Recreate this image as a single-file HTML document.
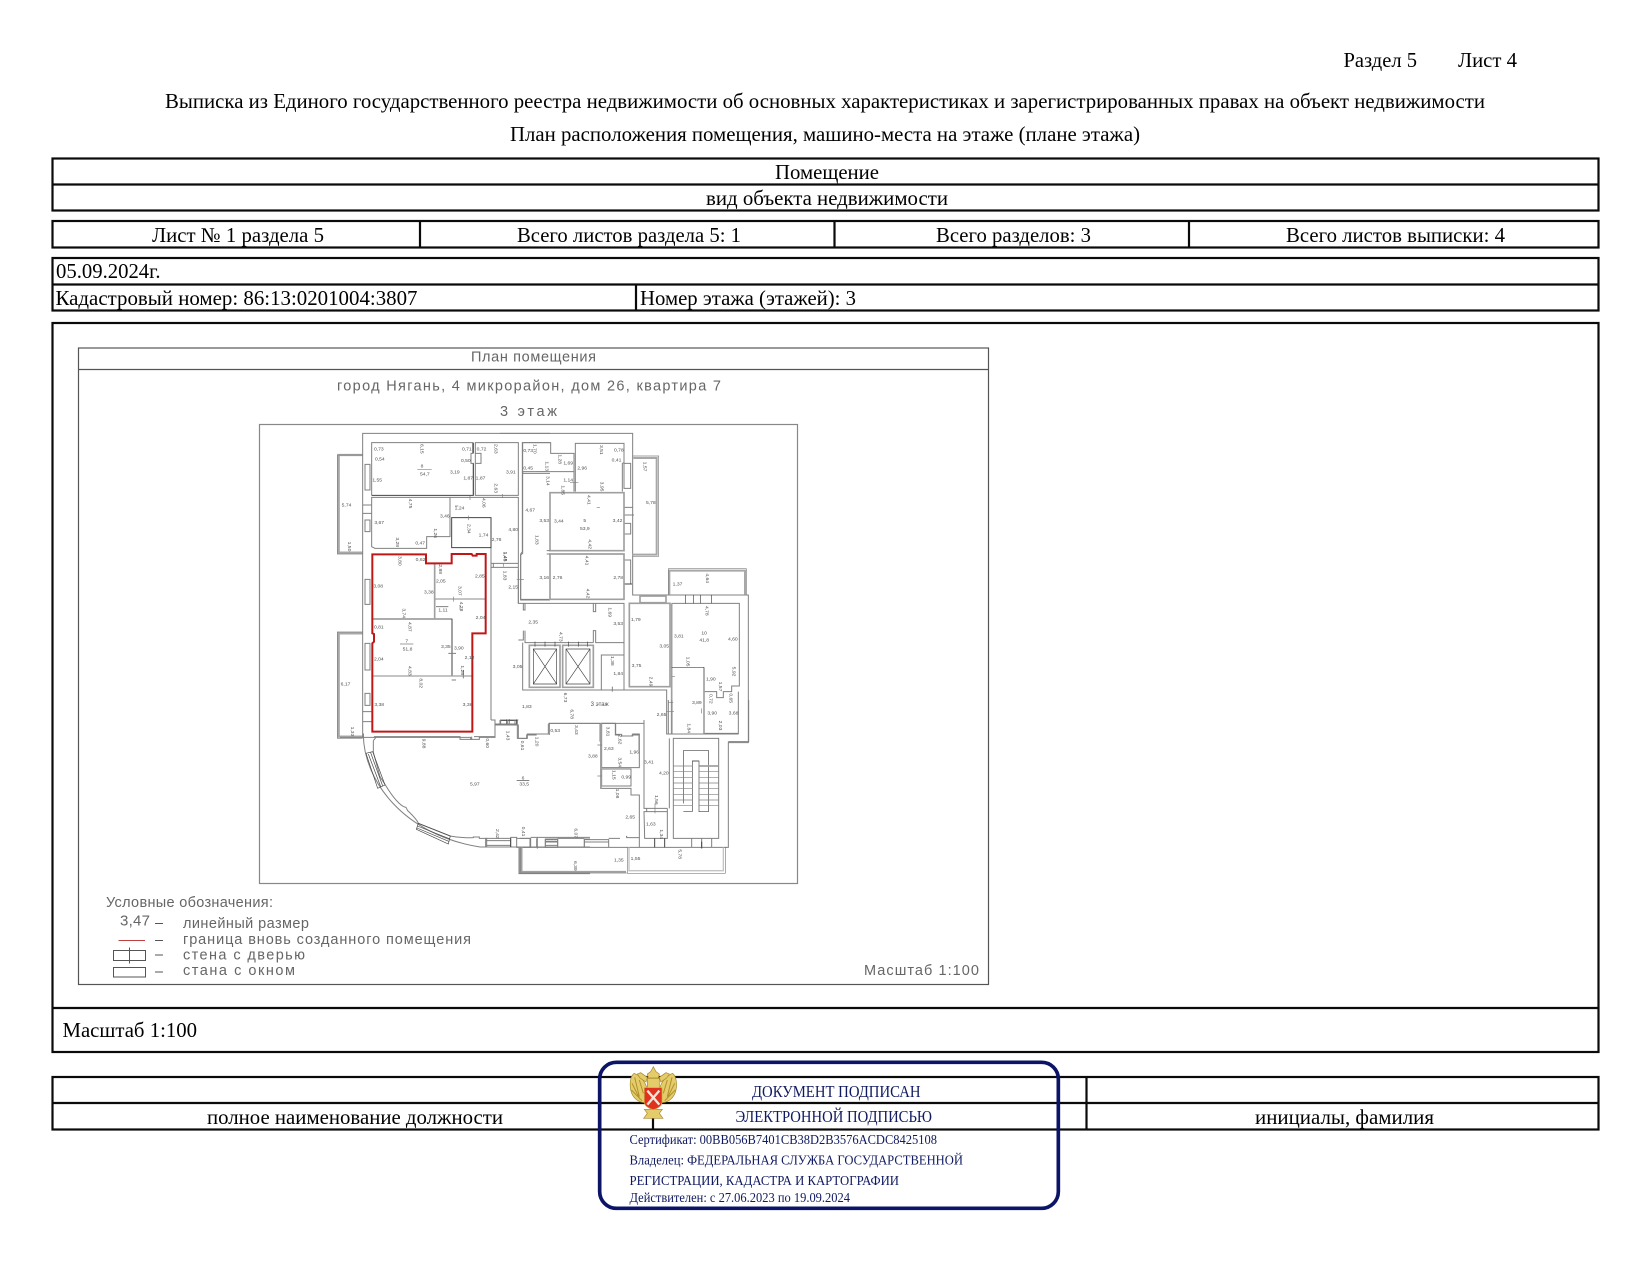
<!DOCTYPE html>
<html lang="ru"><head><meta charset="utf-8"><title>Выписка</title>
<style>
html,body{margin:0;padding:0;background:#fff;width:1650px;height:1275px;overflow:hidden}
svg{display:block}
.m text,text.m{font-family:"Liberation Serif",serif;font-size:21px;fill:#000}
.c text{font-family:"Liberation Sans",sans-serif;font-size:14.5px;fill:#666}
.n text{font-family:"Liberation Sans",sans-serif;font-size:15px;fill:#505050}
.w{fill:none;stroke:#808080;stroke-width:3}
.k{fill:none;stroke:#a0a0a0;stroke-width:5}
.d{fill:none;stroke:#444;stroke-width:3}
.t{fill:none;stroke:#a8a8a8;stroke-width:7}
.s text{font-family:"Liberation Serif",serif;fill:#101a60}
</style></head><body>
<svg xmlns="http://www.w3.org/2000/svg" width="1650" height="1275" viewBox="0 0 1650 1275">
<defs><filter id="b" x="-2%" y="-2%" width="104%" height="104%"><feGaussianBlur stdDeviation="0.3"/></filter></defs>
<rect width="1650" height="1275" fill="#fff"/>

<g class="m">
<text x="1343.5" y="67" textLength="73.5" lengthAdjust="spacingAndGlyphs">Раздел 5</text>
<text x="1458" y="67" textLength="59" lengthAdjust="spacingAndGlyphs">Лист 4</text>
<text x="165" y="108" textLength="1320" lengthAdjust="spacingAndGlyphs">Выписка из Единого государственного реестра недвижимости об основных характеристиках и зарегистрированных правах на объект недвижимости</text>
<text x="510" y="141" textLength="630" lengthAdjust="spacingAndGlyphs">План расположения помещения, машино-места на этаже (плане этажа)</text>
<text x="775" y="178.8" textLength="104" lengthAdjust="spacingAndGlyphs">Помещение</text>
<text x="706" y="204.8" textLength="242" lengthAdjust="spacingAndGlyphs">вид объекта недвижимости</text>
<text x="152" y="241.8" textLength="172" lengthAdjust="spacingAndGlyphs">Лист № 1 раздела 5</text>
<text x="517" y="241.8" textLength="224" lengthAdjust="spacingAndGlyphs">Всего листов раздела 5: 1</text>
<text x="936" y="241.8" textLength="155" lengthAdjust="spacingAndGlyphs">Всего разделов: 3</text>
<text x="1286" y="241.8" textLength="219" lengthAdjust="spacingAndGlyphs">Всего листов выписки: 4</text>
<text x="56" y="277.8" textLength="104.5" lengthAdjust="spacingAndGlyphs">05.09.2024г.</text>
<text x="55.5" y="305" textLength="362" lengthAdjust="spacingAndGlyphs">Кадастровый номер: 86:13:0201004:3807</text>
<text x="640" y="305" textLength="216" lengthAdjust="spacingAndGlyphs">Номер этажа (этажей): 3</text>
<text x="62.5" y="1037" textLength="134.5" lengthAdjust="spacingAndGlyphs">Масштаб 1:100</text>
<text x="207" y="1124" textLength="296" lengthAdjust="spacingAndGlyphs">полное наименование должности</text>
<text x="1255" y="1124" textLength="179" lengthAdjust="spacingAndGlyphs">инициалы, фамилия</text>
</g>

<g fill="none" stroke="#0a0a0a" stroke-width="2.2">
<rect x="52.5" y="158.5" width="1546" height="52"/><path d="M52 184.5H1599"/>
<rect x="52.5" y="221" width="1546" height="26.5"/><path d="M420 221V247.5M834.5 221V247.5M1189 221V247.5"/>
<rect x="52.5" y="258" width="1546" height="52.5"/><path d="M52 284.5H1599M636 284.5V310.5"/>
<rect x="52.5" y="323" width="1546" height="729"/><path d="M52 1008H1599"/>
<rect x="52.5" y="1077" width="1546" height="52.5"/><path d="M52 1103H1599M653 1077V1129.5M1086.5 1077V1129.5"/>
</g>

<g filter="url(#b)">
<g fill="none" stroke="#555" stroke-width="1.2">
<rect x="78.5" y="348" width="910" height="636.5"/><path d="M78.5 369.5H988.5"/>
</g>
<rect x="259.5" y="424.5" width="538" height="459" fill="none" stroke="#888" stroke-width="1.2"/>
<g class="c">
<text x="471" y="361.5" textLength="125" lengthAdjust="spacing">План помещения</text>
<text x="337" y="390.5" textLength="384" lengthAdjust="spacing">город Нягань, 4 микрорайон, дом 26, квартира 7</text>
<text x="500" y="416" textLength="57" lengthAdjust="spacing">3 этаж</text>
<text x="106" y="907" textLength="167" lengthAdjust="spacing">Условные обозначения:</text>
<text x="120" y="925.5" textLength="30" lengthAdjust="spacing" style="font-size:15px">3,47</text>
<text x="183" y="928" textLength="126" lengthAdjust="spacing">линейный размер</text>
<text x="183" y="944" textLength="288" lengthAdjust="spacing">граница вновь созданного помещения</text>
<text x="183" y="959.5" textLength="122" lengthAdjust="spacing">стена с дверью</text>
<text x="183" y="975" textLength="112" lengthAdjust="spacing">стана с окном</text>
<text x="864" y="975" textLength="115" lengthAdjust="spacing">Масштаб 1:100</text>
</g>
<g fill="none" stroke="#555" stroke-width="1">
<path d="M155 923.5H163M155 940.5H163M155 955H163M155 972H163"/>
<rect x="113.5" y="950.5" width="32" height="10"/><path d="M129.5 947.5V963.5"/>
<rect x="113.5" y="967.5" width="32" height="9.5"/>
</g>
<path d="M118.5 940.5H145" stroke="#c04040" stroke-width="1" fill="none"/>

<!-- upper-left plan -->
<g transform="translate(250,420) scale(.33333)">
<path class="t" d="M338 105H266V398H338M338 640H266V950H338"/>
<path class="w" style="stroke-width:2" d="M338 105H262V402H338M338 636H262V955H338"/>
<path class="w" d="M900 40H338V952"/>
<path class="w" d="M345 133H360V210H345ZM345 300H360V335H345ZM345 478H360V553H345ZM345 670H360V750H345ZM345 820H360V856H345ZM338 255H365M338 280H365M338 875H368M338 905H368"/>
<path class="w" d="M365 226V68H668V100H663V130H670V226"/>
<path class="d" d="M365 226H670V130M670 68V100"/>
<path class="w" d="M676 68H805V226H676ZM676 100H693V130H676"/>
<path class="w" d="M365 232H600V350H530V385H375L365 380Z"/>
<path class="w" d="M600 232H805V430H723M723 293V900M730 430V442M805 430V442H722M805 442V550"/>
<path class="d" d="M605 383V293H723V383Z"/>
<path class="k" d="M554 430V595M368 597H607"/>
<path class="d" d="M606 597V767"/>
<path class="k" style="stroke-width:4" d="M554 537H705M368 768H670"/>
<path class="w" d="M817 395V68H900M817 385V395L812 402V540H900M817 160H900"/>
<path class="w" d="M595 560H558M595 700H618M605 780H618M640 750V775"/>
<path fill="none" stroke="#c01818" stroke-width="6" d="M367 403H528V430H605V402H665L668 407H680V402H707V640H667V935H367V670L372 665V642L367 640Z"/>
<path class="w" d="M723 900H735V912H800V900H805M735 912V950H672M372 950H630V958H665V950M338 952H372"/>
<path class="w" d="M750 900V912M778 897V912"/>
<path class="w" style="stroke-width:2" d="M625 258H615M630 555V570M610 545V530M810 478H822M660 228V240M757 222V234M655 287V300M760 430V440M600 258V270"/>
<path class="w" style="stroke-width:2" d="M502 148H545M450 672H490"/>
</g>
<g class="n" transform="translate(250,420) scale(.33333)">
<text x="372" y="92">0,73</text><text x="375" y="122">0,54</text><text x="367" y="185">1,55</text><text x="636" y="92">0,71</text><text x="633" y="126">0,50</text><text x="680" y="92">0,72</text><text x="600" y="160">3,19</text><text x="640" y="178">1,87</text><text x="677" y="178">1,87</text><text x="512" y="143">8</text><text x="510" y="167">54,7</text><text x="275" y="260">5,74</text><text x="373" y="312">3,67</text><text x="614" y="269">1,24</text><text x="570" y="292">3,46</text><text x="686" y="349">1,74</text><text x="725" y="363">2,76</text><text x="496" y="374">0,47</text><text x="370" y="502">3,08</text><text x="497" y="423">0,62</text><text x="558" y="488">2,05</text><text x="675" y="473">2,85</text><text x="522" y="520">3,38</text><text x="565" y="574">1,11</text><text x="677" y="597">2,04</text><text x="372" y="626">0,81</text><text x="372" y="722">2,04</text><text x="573" y="684">3,35</text><text x="612" y="689">3,90</text><text x="644" y="717">2,12</text><text x="373" y="858">3,38</text><text x="638" y="858">3,38</text><text x="466" y="668">7</text><text x="458" y="692">51,8</text><text x="272" y="796">6,17</text>
<text transform="rotate(90 512 72)" x="512" y="72">6,15</text><text transform="rotate(90 733 72)" x="733" y="72">2,63</text><text transform="rotate(90 733 190)" x="733" y="190">2,63</text><text transform="rotate(90 477 236)" x="477" y="236">4,75</text><text transform="rotate(90 697 234)" x="697" y="234">4,06</text><text transform="rotate(90 652 312)" x="652" y="312">2,34</text><text transform="rotate(90 552 325)" x="552" y="325">1,26</text><text transform="rotate(90 438 352)" x="438" y="352">3,28</text><text transform="rotate(90 445 408)" x="445" y="408">3,80</text><text transform="rotate(90 567 433)" x="567" y="433">2,88</text><text transform="rotate(90 458 565)" x="458" y="565">3,74</text><text transform="rotate(90 476 606)" x="476" y="606">4,87</text><text transform="rotate(90 476 738)" x="476" y="738">4,83</text><text transform="rotate(90 508 775)" x="508" y="775">8,02</text><text transform="rotate(90 626 498)" x="626" y="498">3,07</text><text transform="rotate(90 630 545)" x="630" y="545">4,28</text><text transform="rotate(90 633 736)" x="633" y="736">1,28</text><text transform="rotate(90 294 365)" x="294" y="365">1,50</text><text transform="rotate(90 760 452)" x="760" y="452">1,83</text><text transform="rotate(90 762 395)" x="762" y="395">1,45</text>
</g>

<!-- upper-right plan -->
<g transform="translate(500,420) scale(.33333)">
<path class="w" d="M0 40H398V525H745V968H686M398 525H420"/>
<path class="t" style="stroke-width:6" d="M400 114H470V404H398M508 523V452H735V523"/>
<path class="w" style="stroke-width:2" d="M398 108H476V409H398M505 525V446H739V525"/>
<path class="w" d="M372 130H392V205H372ZM372 262H398M372 285H402M372 310H392V342H372ZM372 420H392V492H372Z"/>
<path class="d" d="M372 492H396"/>
<path class="w" d="M68 390V68H152V100H222V155H68M222 155V215M68 390V400L62 405V538H150M70 157H68"/>
<path class="w" d="M226 215V70H372V128L367 130V215"/>
<path class="k" d="M150 392V218H372V392ZM150 402H372V538H150Z"/>
<path class="w" d="M140 392H150M140 402H150M55 450V550H372V668H287V632H280V668M70 550V570H75V550M280 550V575H287V550"/>
<path class="w" d="M70 632V660H55M75 632V668H280M68 668V810H372V668"/>
<path class="k" d="M88 676H180V802H88ZM188 676H280V802H188Z"/>
<path class="d" style="stroke-width:2" d="M100 687H170V792H100ZM100 687L170 792M170 687L100 792M198 687H270V792H198ZM198 687L270 792M270 687L198 792"/>
<path class="d" style="stroke-width:2" d="M105 665V680M135 665V680M165 665V680M205 665V680M235 665V680M262 665V680"/>
<path class="w" d="M304 810V705H372M337 800V815"/>
<path class="k" d="M388 550V800H510V550H388ZM420 528H498V548H420Z"/>
<path class="w" d="M372 810H500V942H512M515 550H718V798H695V815H670V833H650V815H612V940H715V815"/>
<path class="k" d="M515 550V942"/>
<path class="k" d="M612 742V940"/>
<path class="d" style="stroke-width:2" d="M515 742H612M557 525V550M580 525V550M602 525V550M635 525V550"/>
<path class="w" d="M0 900H52V912M52 912V955H80V945H110M148 945V910H300V965"/>
<path class="w" d="M432 900V985"/>
<path class="k" d="M303 910V990"/>
<path class="w" d="M303 910H346V945H360M395 945H417V990"/>
<path class="d" style="stroke-width:2" d="M20 898V912M50 898V912M0 902H52"/>
<path class="w" style="stroke-width:2" d="M110 155H140M210 187H235M515 770H525M505 848H520M605 865V880M300 262H290M50 478H70"/>
</g>
<g class="n" transform="translate(500,420) scale(.33333)">
<text x="70" y="96">0,73</text><text x="190" y="134">1,69</text><text x="70" y="148">0,45</text><text x="18" y="160">3,91</text><text x="232" y="148">2,96</text><text x="342" y="94">0,78</text><text x="335" y="124">0,41</text><text x="190" y="185">1,14</text><text x="76" y="275">4,67</text><text x="25" y="333">4,80</text><text x="118" y="306">3,53</text><text x="162" y="308">3,44</text><text x="338" y="306">3,42</text><text x="250" y="306">5</text><text x="240" y="330">53,9</text><text x="118" y="477">3,16</text><text x="158" y="477">2,76</text><text x="340" y="477">2,78</text><text x="25" y="506">2,15</text><text x="438" y="252">5,78</text><text x="518" y="497">1,37</text><text x="85" y="610">2,35</text><text x="340" y="615">3,53</text><text x="393" y="603">1,79</text><text x="38" y="744">3,05</text><text x="340" y="765">1,84</text><text x="395" y="741">3,75</text><text x="478" y="682">3,05</text><text x="522" y="652">3,81</text><text x="604" y="644">10</text><text x="598" y="664">41,8</text><text x="684" y="662">4,60</text><text x="618" y="781">1,90</text><text x="576" y="852">3,89</text><text x="622" y="883">3,90</text><text x="686" y="883">3,68</text><text x="66" y="864">1,83</text><text x="272" y="858" style="font-size:18px">3 этаж</text>
<text transform="rotate(90 100 72)" x="100" y="72">1,70</text><text transform="rotate(90 176 103)" x="176" y="103">1,28</text><text transform="rotate(90 137 124)" x="137" y="124">1,13</text><text transform="rotate(90 139 168)" x="139" y="168">3,14</text><text transform="rotate(90 184 196)" x="184" y="196">1,85</text><text transform="rotate(90 300 75)" x="300" y="75">3,51</text><text transform="rotate(90 302 185)" x="302" y="185">3,95</text><text transform="rotate(90 262 225)" x="262" y="225">4,41</text><text transform="rotate(90 265 358)" x="265" y="358">4,42</text><text transform="rotate(90 257 407)" x="257" y="407">4,41</text><text transform="rotate(90 260 506)" x="260" y="506">4,42</text><text transform="rotate(90 430 125)" x="430" y="125">1,57</text><text transform="rotate(90 618 460)" x="618" y="460">4,64</text><text transform="rotate(90 325 562)" x="325" y="562">1,69</text><text transform="rotate(90 617 558)" x="617" y="558">4,78</text><text transform="rotate(90 178 636)" x="178" y="636">4,73</text><text transform="rotate(90 333 708)" x="333" y="708">1,38</text><text transform="rotate(90 448 770)" x="448" y="770">2,49</text><text transform="rotate(90 560 710)" x="560" y="710">1,05</text><text transform="rotate(90 697 740)" x="697" y="740">5,92</text><text transform="rotate(90 657 785)" x="657" y="785">1,57</text><text transform="rotate(90 628 822)" x="628" y="822">0,72</text><text transform="rotate(90 688 820)" x="688" y="820">0,65</text><text transform="rotate(90 562 910)" x="562" y="910">1,84</text><text transform="rotate(90 657 902)" x="657" y="902">2,03</text><text transform="rotate(90 192 818)" x="192" y="818">6,73</text><text transform="rotate(90 212 868)" x="212" y="868">6,78</text><text transform="rotate(90 225 915)" x="225" y="915">3,43</text><text transform="rotate(90 107 345)" x="107" y="345">1,83</text><text transform="rotate(90 11 395)" x="11" y="395">1,45</text>
</g>

<!-- lower-left plan -->
<g transform="translate(340,720) scale(.33333)">
<path class="w" d="M0 52H70V40M100 52H392V58H418V52H465V15H535V55H562V42H625V12"/>
<path class="w" d="M482 0V15M503 0V15M525 0V15"/>
<path class="w" d="M70 42C70 180 190 345 420 381H750"/>
<path class="w" d="M100 62V97L120 170 138 198C170 250 190 262 198 262L203 272C222 290 232 302 235 310L330 348C350 352 380 354 400 353V351H418V355H440V380"/>
<path class="w" d="M100 62L108 52"/>
<path class="d" style="stroke-width:2" d="M78 100L98 95L135 195L113 205ZM85 102L122 200M92 98L128 198M235 310L331 348L325 372L229 328ZM232 318L328 356M231 324L326 364"/>
<path class="w" d="M437 355H512V381H437ZM437 362H512M437 376H512"/>
<path class="d" d="M512 355V381"/>
<path class="w" d="M512 355V352H530V382H572V355H530M572 352H750M572 355V382M592 352V386M616 357H653V382H616ZM616 364H653M616 376H653M733 357H750M733 382V357"/>
<path class="k" d="M541 382V458H750"/>
<path class="w" d="M537 382V461H750"/>
<path class="d" style="stroke-width:2" d="M530 182H568"/>
</g>
<g class="n" transform="translate(340,720) scale(.33333)">
<text x="631" y="36">0,53</text><text x="390" y="196">5,97</text><text x="545" y="178">6</text><text x="538" y="196">33,5</text>
<text transform="rotate(90 33 20)" x="33" y="20">1,33</text><text transform="rotate(90 248 56)" x="248" y="56">9,88</text><text transform="rotate(90 438 55)" x="438" y="55">0,60</text><text transform="rotate(90 500 32)" x="500" y="32">1,43</text><text transform="rotate(90 543 62)" x="543" y="62">0,61</text><text transform="rotate(90 586 50)" x="586" y="50">1,20</text><text transform="rotate(90 468 327)" x="468" y="327">2,42</text><text transform="rotate(90 546 320)" x="546" y="320">0,41</text><text transform="rotate(90 704 325)" x="704" y="325">6,07</text><text transform="rotate(90 702 423)" x="702" y="423">6,39</text>
</g>

<!-- lower-right plan -->
<g transform="translate(520,700) scale(.33333)">
<path class="w" d="M85 70H372V325H442"/>
<path class="w" d="M245 70H287V103H305V108H338V102H358V203H245ZM242 70V265H333V285H358V413H320V409H318M245 207H333V258H245Z"/>
<path class="k" d="M243 70V265"/>
<path class="w" d="M445 0V102H656M456 0V102M448 115V325"/>
<path class="w" d="M372 335H442V415H374ZM380 325V335M442 325V335"/>
<path class="w" d="M358 413V442M0 442H620M0 415H30M30 415V442M50 415V442M76 419H113V442H76ZM76 426H113M193 419H266V442H193ZM193 426H266M113 415H193M266 415H300"/>
<path class="w" d="M460 115H596V415H460Z"/>
<path class="d" style="stroke-width:2" d="M490 310V152H566V335M517 335V183H537V335H566M490 335H517"/>
<path class="w" style="stroke-width:2" d="M460 198H517M460 215H517M460 232H517M460 249H517M460 266H517M460 283H517M460 300H517M460 317H517M537 198H596M537 215H596M537 232H596M537 249H596M537 266H596M537 283H596M537 300H596M537 317H596"/>
<path class="k" d="M518 183H536M538 198H596"/>
<path class="w" d="M625 125H686V0M625 125V442H616M515 415V442M545 415V445M575 415V442"/>
<path class="d" d="M404 415V442M434 415V442M545 425V445"/>
<path class="k" d="M5 442V515H318"/>
<path class="w" style="stroke-width:2" d="M2 442V519H320M322 442V520H616V442"/>
<path class="t" style="stroke:#c4c4c4;stroke-width:4" d="M327 442V512H610V442"/>
<path class="w" style="stroke-width:2" d="M232 135H246M232 228H246M438 35H462M405 310V340"/>
</g>
<g class="n" transform="translate(520,700) scale(.33333)">
<text x="252" y="150">2,63</text><text x="204" y="172">3,88</text><text x="328" y="160">1,96</text><text x="304" y="236">0,99</text><text x="372" y="190">3,41</text><text x="417" y="223">4,20</text><text x="316" y="356">2,65</text><text x="378" y="376">1,63</text><text x="282" y="484">1,35</text><text x="332" y="480">1,55</text><text x="410" y="48">2,65</text>
<text transform="rotate(90 260 80)" x="260" y="80">3,81</text><text transform="rotate(90 295 104)" x="295" y="104">2,62</text><text transform="rotate(90 295 172)" x="295" y="172">3,54</text><text transform="rotate(90 278 210)" x="278" y="210">1,15</text><text transform="rotate(90 288 266)" x="288" y="266">1,08</text><text transform="rotate(90 405 285)" x="405" y="285">1,56</text><text transform="rotate(90 420 388)" x="420" y="388">1,34</text><text transform="rotate(90 475 448)" x="475" y="448">5,78</text>
</g>
</g>

<!-- stamp -->
<g transform="translate(590,1050) scale(.33333)">
<rect x="29" y="37" width="1376" height="438" rx="50" fill="none" stroke="#0b1466" stroke-width="11"/>
<g stroke="#a5882a" stroke-width="2">
<path fill="#e4cc6a" d="M172 118C165 92 152 78 132 70C122 78 118 98 122 120C127 142 142 156 164 158Z"/>
<path fill="#e4cc6a" d="M208 118C215 92 228 78 248 70C258 78 262 98 258 120C253 142 238 156 216 158Z"/>
<path fill="#e4cc6a" d="M172 85H208V118H172ZM163 178H217L208 190 219 205H161L172 190Z"/>
<path fill="#e4cc6a" d="M190 50L198 65 208 72 205 84H175L172 72 182 65Z"/>
<path fill="#e4cc6a" d="M172 82L152 68 142 72 150 84 168 96ZM208 82L228 68 238 72 230 84 212 96Z"/>
<path fill="none" stroke="#b0902c" stroke-width="3" d="M134 82L148 140M126 100L150 148M124 120L156 152M246 82L232 140M254 100L230 148M256 120L224 152M148 90L160 130M232 90L220 130"/>
</g>
<path fill="#e0321e" stroke="#c9a83a" stroke-width="2" d="M163 113H216V158C214 170 200 176 190 179C180 176 165 170 163 158Z"/>
<path stroke="#f5e6d8" stroke-width="7" d="M172 122L208 164M208 122L172 164"/>
</g>
<g class="s" transform="translate(590,1050)">
<text x="162" y="47" font-size="16.5" textLength="168.5" lengthAdjust="spacingAndGlyphs">ДОКУМЕНТ ПОДПИСАН</text>
<text x="145.5" y="72" font-size="16.5" textLength="196.5" lengthAdjust="spacingAndGlyphs">ЭЛЕКТРОННОЙ ПОДПИСЬЮ</text>
<text x="39.5" y="94" font-size="13.5" textLength="307.5" lengthAdjust="spacingAndGlyphs">Сертификат: 00BB056B7401CB38D2B3576ACDC8425108</text>
<text x="39.5" y="114.5" font-size="13.5" textLength="333.5" lengthAdjust="spacingAndGlyphs">Владелец: ФЕДЕРАЛЬНАЯ СЛУЖБА ГОСУДАРСТВЕННОЙ</text>
<text x="39.5" y="135" font-size="13.5" textLength="269.5" lengthAdjust="spacingAndGlyphs">РЕГИСТРАЦИИ, КАДАСТРА И КАРТОГРАФИИ</text>
<text x="39.5" y="152" font-size="13.5" textLength="220.5" lengthAdjust="spacingAndGlyphs">Действителен: с 27.06.2023 по 19.09.2024</text>
</g>
</svg>
</body></html>
